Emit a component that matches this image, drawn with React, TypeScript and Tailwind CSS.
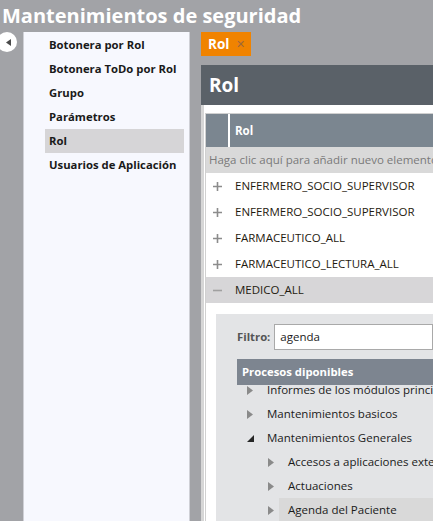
import React from 'react';

const menuItems = [
  'Botonera por Rol',
  'Botonera ToDo por Rol',
  'Grupo',
  'Parámetros',
  'Rol',
  'Usuarios de Aplicación',
];

const roles = [
  'ENFERMERO_SOCIO_SUPERVISOR',
  'ENFERMERO_SOCIO_SUPERVISOR',
  'FARMACEUTICO_ALL',
  'FARMACEUTICO_LECTURA_ALL',
];

type TreeNode = { label: string; level: number; expanded?: boolean; selected?: boolean };

const tree: TreeNode[] = [
  { label: 'Informes de los módulos principales', level: 0 },
  { label: 'Mantenimientos basicos', level: 0 },
  { label: 'Mantenimientos Generales', level: 0, expanded: true },
  { label: 'Accesos a aplicaciones externas', level: 1 },
  { label: 'Actuaciones', level: 1 },
  { label: 'Agenda del Paciente', level: 1, selected: true },
];

const Plus = () => (
  <svg width="9" height="9" viewBox="0 0 9 9" className="shrink-0">
    <path d="M4.5 0v9M0 4.5h9" stroke="#8c8c8c" strokeWidth="1.6" />
  </svg>
);

const Minus = () => (
  <svg width="9" height="9" viewBox="0 0 9 9" className="shrink-0">
    <path d="M0 4.5h9" stroke="#a0a0a0" strokeWidth="1.6" />
  </svg>
);

const Arrow = ({ expanded }: { expanded?: boolean }) =>
  expanded ? (
    <svg width="7" height="7" viewBox="0 0 7 7" className="shrink-0">
      <path d="M7 0v7H0z" fill="#262626" />
    </svg>
  ) : (
    <svg width="6" height="9" viewBox="0 0 6 9" className="shrink-0">
      <path d="M0 0l6 4.5L0 9z" fill="#8a8a8a" />
    </svg>
  );

export default function App() {
  return (
    <div
      className="w-[433px] h-[521px] overflow-hidden bg-[#a2a3a7] flex flex-col"
      style={{ fontFamily: '"Segoe UI", "Open Sans", "Noto Sans", sans-serif' }}
    >
      <div className="h-[32px] shrink-0 pl-[2px] text-[20px] leading-[31px] font-bold text-white whitespace-nowrap">
        Mantenimientos de seguridad
      </div>

      <div className="flex flex-1 min-h-0">
        <div className="w-[23px] shrink-0">
          <div className="-ml-[3px] w-[20px] h-[20px] rounded-full bg-white flex items-center justify-center">
            <svg width="5" height="7" viewBox="0 0 5 7" className="ml-[2px]">
              <path d="M5 0v7L0 3.5z" fill="#4a4a4a" />
            </svg>
          </div>
        </div>

        <div className="w-[167px] shrink-0 bg-[#f7f8fe] border-x border-[#cfd0d6] pt-[1px]">
          <div className="ml-[21px] mr-[5px]">
            {menuItems.map((m) => (
              <div
                key={m}
                className={`h-[24px] px-[4px] flex items-center text-[11.3px] font-bold text-[#1a1a1a] whitespace-nowrap ${
                  m === 'Rol' ? 'bg-[#d6d5d7]' : ''
                }`}
              >
                {m}
              </div>
            ))}
          </div>
        </div>

        <div className="flex-1 min-w-0 flex flex-col pl-[11px]">
          <div className="h-[24px] w-[50px] bg-[#f08300] flex items-center pl-[7px] gap-[7px]">
            <span className="text-[13.5px] font-bold text-white">Rol</span>
            <span className="text-[11px] text-[#a0683a]">✕</span>
          </div>

          <div className="mt-[9px] flex-1 min-h-0 flex flex-col">
            <div className="h-[40px] shrink-0 bg-[#5a6168] flex items-center pl-[8px] text-[19px] font-bold text-white">
              Rol
            </div>

            <div className="flex-1 min-h-0 bg-white border-l-[3px] border-[#d6d6d6] pt-[8px] pl-[1px] overflow-hidden">
              <div className="border-l border-t border-[#d0d0d0]">
                <div className="h-[33px] flex">
                  <div className="w-[22px] bg-[#7b8690]" />
                  <div className="w-[2px] bg-white" />
                  <div className="flex-1 bg-[#7b8690] flex items-center pl-[5px] text-[11.5px] font-bold text-white">
                    Rol
                  </div>
                </div>
                <div className="h-[26px] bg-[#d9d9d9] flex items-center pl-[3px] text-[11.5px] text-[#7a7a7a] whitespace-nowrap">
                  Haga clic aquí para añadir nuevo elemento
                </div>
                {roles.map((r, i) => (
                  <div key={i} className="h-[26px] flex items-center pl-[7px] gap-[13px] text-[11.5px] text-[#1f1a10] whitespace-nowrap">
                    <Plus />
                    {r}
                  </div>
                ))}
                <div className="h-[26px] bg-[#d7d6d8] flex items-center pl-[7px] gap-[13px] text-[11.5px] text-[#1f1a10] whitespace-nowrap">
                  <Minus />
                  MEDICO_ALL
                </div>

                <div className="pl-[10px] pt-[11px]">
                  <div className="bg-[#e3e4e6] pl-[21px] pt-[10px] h-[220px]">
                    <div className="flex items-center gap-[4px]">
                      <span className="text-[11.3px] font-bold text-[#555]">Filtro:</span>
                      <div className="flex-1 h-[26px] bg-white border border-[#a9a9a9] flex items-center pl-[5px] text-[11.5px] text-[#1a1a1a]">
                        agenda
                      </div>
                    </div>
                    <div className="mt-[9px] h-[26px] bg-[#7d8590] flex items-center pl-[5px] text-[11.3px] font-bold text-white whitespace-nowrap">
                      Procesos diponibles
                    </div>
                    <div className="overflow-hidden">
                      <div className="-mt-[7px]">
                        {tree.map((n) => (
                          <div
                            key={n.label}
                            className={`h-[24px] flex items-center text-[11.5px] text-[#1a1a1a] whitespace-nowrap ${
                              n.level === 1 ? 'ml-[31px]' : 'ml-[10px]'
                            }`}
                          >
                            <div className="w-[20px] shrink-0 flex items-center">
                              <Arrow expanded={n.expanded} />
                            </div>
                            <div className={`h-full flex-1 flex items-center ${n.selected ? 'bg-[#d9d9d9] -ml-[9px] pl-[9px]' : ''}`}>
                              {n.label}
                            </div>
                          </div>
                        ))}
                      </div>
                    </div>
                  </div>
                </div>
              </div>
            </div>
          </div>
        </div>
      </div>
    </div>
  );
}
